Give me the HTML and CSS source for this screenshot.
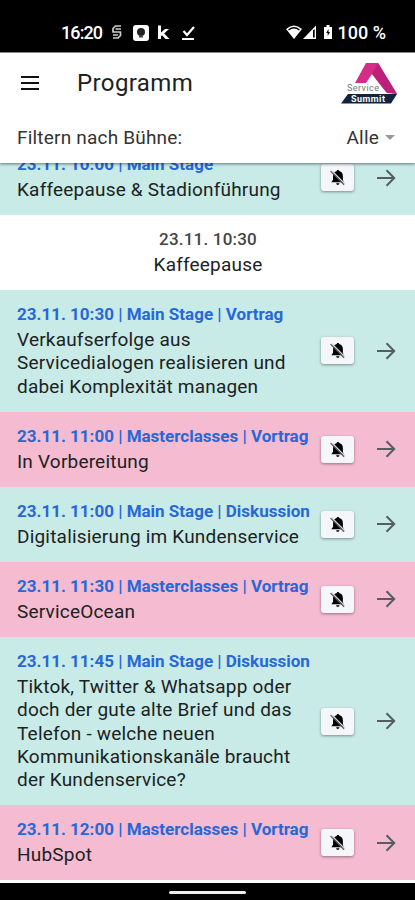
FILE: index.html
```html
<!DOCTYPE html>
<html lang="de">
<head>
  <meta charset="UTF-8">
  <meta name="viewport" content="width=device-width, initial-scale=1">
  <title>Programm</title>
  <link rel="stylesheet" href="styles.css">
</head>
<body>

  <!-- shared icons -->
  <svg class="sprite" width="0" height="0">
    <symbol id="bell-off" viewBox="0 0 18 18">
      <path d="M9.500 1c-.9 0-1.300.5-1.300 1.200C5.500 2.900 4.300 4.900 4.300 7.500v4L2.500 14h13L14.700 11.500v-4c0-2.600-1.200-4.600-3.900-5.300C10.800 1.500 10.400 1 9.500 1z"/>
      <path d="M7.600 15h3.400c0 1.100-.7 1.800-1.700 1.800s-1.700-.7-1.700-1.800z"/>
      <path d="M2.600 1.600L16.600 15.600" stroke="#d8d9dc" stroke-width="1.500"/>
      <path d="M1.600 2.300L16 16.700" stroke="#555" stroke-width="1.200"/>
    </symbol>
    <symbol id="arrow" viewBox="0 0 20 20">
      <path d="M1 10h17M10.500 2.300L18.200 10l-7.700 7.700" fill="none" stroke="#555e5e" stroke-width="2"/>
    </symbol>
  </svg>

  <div class="statusbar">
    <span class="clock">16:20</span>
    <svg class="status-left" width="86" height="18" viewBox="0 0 86 18">
      <path d="M12 2H6.500L4 4.500V8h7.500v3.500L9 14H4M4 11h5M6.500 5H12" fill="none" stroke="#ccc" stroke-width="1.700"/>
      <rect x="24" y="1" width="16" height="16" rx="3" fill="#fff"/>
      <circle cx="32" cy="8" r="4" fill="#222"/>
      <path d="M30 11.500h4v2h-4z" fill="#444"/>
      <path d="M49 1.500h3v7l4-3.500h4l-4.800 4.500L60.500 15h-4L53 11.200l-1 1V15h-3z" fill="#fff"/>
      <path d="M74.500 7l3.500 4 7-8" fill="none" stroke="#fff" stroke-width="2.200"/>
      <path d="M73 15h12" stroke="#fff" stroke-width="2"/>
    </svg>
    <svg class="status-right" width="48" height="18" viewBox="0 0 48 18">
      <path d="M0 5Q8-2 16 5L8 15z" fill="#fff"/>
      <path d="M2.500 6Q8 1.500 13.500 6" fill="none" stroke="#000" stroke-width="1.300"/>
      <path d="M30 1.500v13.500H17z" fill="#fff"/>
      <path d="M27 6.500v7h1.700V5z" fill="#000"/>
      <path d="M38 3h2.500V1h3v2H46V15h-8z" fill="#fff"/>
      <path d="M42.500 5l-2.300 4h1.500v3l2.300-4h-1.500z" fill="#000"/>
    </svg>
    <span class="battery">100 %</span>
  </div>

  <header class="toolbar">
    <svg class="menu" width="20" height="14" viewBox="0 0 20 14">
      <path d="M1 1h18M1 7h18M1 13h18" stroke="#111" stroke-width="1.900"/>
    </svg>
    <h1>Programm</h1>
    <svg class="logo" width="56" height="42" viewBox="0 0 56 42">
      <path d="M14 21L25 1h12l19 31-11-2-14-18-6 9z" fill="#d52d87"/>
      <path d="M37 1l19 31-10-1L31 12z" fill="#bd2078"/>
      <path d="M7 32h49l-6 9.500H0z" fill="#10243c"/>
      <text class="logo-top" x="6" y="29" textLength="32">Service</text>
      <text class="logo-bottom" x="10" y="40" textLength="34">Summit</text>
    </svg>
  </header>

  <div class="filter">
    <span>Filtern nach Bühne:</span>
    <span class="select">Alle</span>
  </div>

  <main class="list">
    <div class="item main-stage first">
      <div class="text">
        <h2>23.11. 10:00 | Main Stage</h2>
        <p>Kaffeepause &amp; Stadionführung</p>
      </div>
      <button class="notify"><svg><use href="#bell-off"/></svg></button>
      <svg class="arrow"><use href="#arrow"/></svg>
    </div>

    <div class="item break">
      <div class="text">
        <h2>23.11. 10:30</h2>
        <p>Kaffeepause</p>
      </div>
    </div>

    <div class="item main-stage">
      <div class="text">
        <h2>23.11. 10:30 | Main Stage | Vortrag</h2>
        <p>Verkaufserfolge aus Servicedialogen realisieren und dabei Komplexität managen</p>
      </div>
      <button class="notify"><svg><use href="#bell-off"/></svg></button>
      <svg class="arrow"><use href="#arrow"/></svg>
    </div>

    <div class="item masterclass">
      <div class="text">
        <h2>23.11. 11:00 | Masterclasses | Vortrag</h2>
        <p>In Vorbereitung</p>
      </div>
      <button class="notify"><svg><use href="#bell-off"/></svg></button>
      <svg class="arrow"><use href="#arrow"/></svg>
    </div>

    <div class="item main-stage">
      <div class="text">
        <h2>23.11. 11:00 | Main Stage | Diskussion</h2>
        <p>Digitalisierung im Kundenservice</p>
      </div>
      <button class="notify"><svg><use href="#bell-off"/></svg></button>
      <svg class="arrow"><use href="#arrow"/></svg>
    </div>

    <div class="item masterclass">
      <div class="text">
        <h2>23.11. 11:30 | Masterclasses | Vortrag</h2>
        <p>ServiceOcean</p>
      </div>
      <button class="notify"><svg><use href="#bell-off"/></svg></button>
      <svg class="arrow"><use href="#arrow"/></svg>
    </div>

    <div class="item main-stage">
      <div class="text">
        <h2>23.11. 11:45 | Main Stage | Diskussion</h2>
        <p>Tiktok, Twitter &amp; Whatsapp oder doch der gute alte Brief und das Telefon - welche neuen Kommunikationskanäle braucht der Kundenservice?</p>
      </div>
      <button class="notify"><svg><use href="#bell-off"/></svg></button>
      <svg class="arrow"><use href="#arrow"/></svg>
    </div>

    <div class="item masterclass">
      <div class="text">
        <h2>23.11. 12:00 | Masterclasses | Vortrag</h2>
        <p>HubSpot</p>
      </div>
      <button class="notify"><svg><use href="#bell-off"/></svg></button>
      <svg class="arrow"><use href="#arrow"/></svg>
    </div>
  </main>

  <div class="navbar"><span class="handle"></span></div>

</body>
</html>
```
FILE: styles.css
```css
* {
  box-sizing: border-box;
}

body {
  display: flex;
  flex-direction: column;
  height: 900px;
  margin: 0;
  overflow: hidden;
  background-color: #fff;
  color: #1c2222;
  font-family: Roboto, sans-serif;
}

h1, h2, p {
  margin: 0;
}

.sprite {
  display: none;
}

/* Android status bar */
.statusbar {
  display: flex;
  align-items: center;
  flex: none;
  height: 52px;
  padding: 13px 29px 0 61px;
  background-color: #000;
  color: #fff;
  font-size: 18px;
  font-weight: 500;
}

.clock {
  letter-spacing: -0.9px;
}

.status-left {
  margin-left: 7px;
}

.status-right {
  margin-left: auto;
}

.battery {
  margin-left: 4px;
}

/* page header */
.toolbar {
  display: flex;
  align-items: center;
  flex: none;
  height: 60px;
  padding: 0 18px 0 20px;
  border-top: 1px solid #888;
}

.toolbar h1 {
  margin-left: 37px;
  font-size: 24px;
  font-weight: 400;
  letter-spacing: 0.4px;
}

.logo {
  margin-left: auto;
}

.logo-top {
  fill: #777;
  font-size: 9px;
}

.logo-bottom {
  fill: #fff;
  font-size: 9px;
  font-weight: 700;
}

.filter {
  position: relative;
  z-index: 1;
  display: flex;
  align-items: center;
  justify-content: space-between;
  flex: none;
  height: 51px;
  padding: 0 20px 0 17px;
  background-color: #fff;
  box-shadow: 0 1px 3px rgba(0, 0, 0, 0.5);
  clip-path: inset(0 0 -6px 0);
  color: #333;
  font-size: 19px;
  letter-spacing: 0.2px;
}

.select {
  display: flex;
  align-items: center;
  gap: 6px;
}

.select::after {
  content: "";
  border: 5px solid transparent;
  border-top-color: #999;
  border-bottom: 0;
}

/* programme list */
.list {
  flex: 1;
  overflow: hidden;
}

.item {
  display: flex;
  align-items: center;
  min-height: 75px;
  padding: 12px 19px 13px 17px;
}

.item.first {
  margin-top: -23px;
}

.main-stage {
  background-color: #c8ebe7;
}

.masterclass {
  background-color: #f4bbd1;
}

.text {
  flex: 1;
  min-width: 0;
}

.item h2 {
  color: #2768d8;
  font-size: 17px;
  font-weight: 700;
  line-height: 24px;
  white-space: nowrap;
}

.item p {
  margin-top: 2px;
  padding-right: 10px;
  padding-bottom: 0.600px;
  font-size: 19px;
  line-height: 23.400px;
  letter-spacing: 0.2px;
}

.item.break {
  padding-right: 16px;
  text-align: center;
}

.break h2 {
  color: #444;
  font-weight: 500;
  letter-spacing: 0.2px;
}

.break p {
  padding-right: 0;
}

.notify {
  display: flex;
  align-items: center;
  justify-content: center;
  flex: none;
  width: 33px;
  height: 27px;
  margin-top: 1px;
  padding: 0;
  border: 0;
  border-radius: 3px;
  background-color: #f5f6fa;
  box-shadow: 0 1px 3px rgba(0, 0, 0, 0.4);
}

.notify svg {
  width: 17px;
  height: 17px;
}

.arrow {
  flex: none;
  width: 20px;
  height: 20px;
  margin-top: 1px;
  margin-left: 22px;
}

/* gesture bar */
.navbar {
  display: flex;
  align-items: center;
  justify-content: center;
  flex: none;
  height: 17px;
  background-color: #000;
}

.handle {
  width: 77px;
  height: 3px;
  margin-top: 1px;
  border-radius: 2px;
  background-color: #eee;
}
```
